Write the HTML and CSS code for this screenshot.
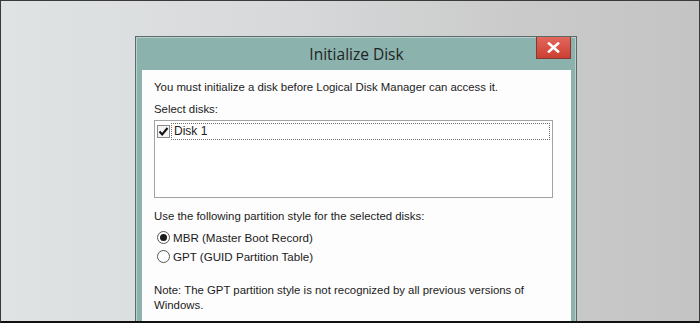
FILE: index.html
```html
<!DOCTYPE html>
<html>
<head>
<meta charset="utf-8">
<link rel="stylesheet" href="styles.css">
</head>
<body>
<div class="stage">
  <div class="dialog">
    <div class="titlebar">
      <div class="title">Initialize Disk</div>
      <div class="close">
        <svg width="13" height="11" viewBox="0 0 13 11"><path d="M2 1.5 L11 9.5 M11 1.5 L2 9.5" stroke="#fff" stroke-width="2.6" stroke-linecap="square"/></svg>
      </div>
    </div>
    <div class="client">
      <p class="line">You must initialize a disk before Logical Disk Manager can access it.</p>
      <p class="line sel">Select disks:</p>
      <div class="listbox">
        <div class="item">
          <span class="check"><svg width="11" height="11" viewBox="0 0 11 11"><path d="M1.5 5.5 L4.2 8.5 L9.5 2" fill="none" stroke="#111" stroke-width="2"/></svg></span>
          <span class="focus">Disk 1</span>
        </div>
      </div>
      <p class="line use">Use the following partition style for the selected disks:</p>
      <div class="radio first"><span class="dot on"></span><span>MBR (Master Boot Record)</span></div>
      <div class="radio"><span class="dot"></span><span>GPT (GUID Partition Table)</span></div>
      <p class="line note">Note: The GPT partition style is not recognized by all previous versions of Windows.</p>
    </div>
  </div>
</div>
</body>
</html>
```

FILE: styles.css
```css
html, body {
  margin: 0;
  padding: 0;
}
body {
  width: 700px;
  height: 323px;
  overflow: hidden;
  font-family: "Liberation Sans", Arial, sans-serif;
}
.stage {
  box-sizing: border-box;
  width: 700px;
  height: 323px;
  overflow: hidden;
  border: 1px solid #3a3a3a;
  border-bottom: 2px solid #111;
  background: linear-gradient(to right, #e0e3e4 0%, #d7d9da 40%, #cacaca 75%, #c4c4c4 100%);
  padding: 35px 0 0 134px;
}
.dialog {
  width: 429px;
  border: 1px solid #5b6b6a;
  border-bottom: none;
  background: #8cb2ae;
  box-shadow: inset 1px 1px 0 #b9d1ce, inset -1px 0 0 #b9d1ce;
  padding: 0 5px 0 6px;
  height: 300px;
}
.titlebar {
  position: relative;
  height: 33px;
  display: flex;
  justify-content: center;
  align-items: center;
}
.title {
  font-family: "Open Sans", "Noto Sans", sans-serif;
  font-size: 15.5px;
  color: #1d2424;
  padding-top: 1px;
}
.close {
  position: absolute;
  right: 0;
  top: 0;
  width: 35px;
  height: 22px;
  box-sizing: border-box;
  border: 1px solid #7e3a33;
  border-top: none;
  background: linear-gradient(#e2675b, #cc3f33);
  display: flex;
  align-items: center;
  justify-content: center;
}
.client {
  background: #fdfdfd;
  height: 300px;
  padding: 10px 0 0 12px;
  box-sizing: border-box;
  font-size: 11.4px;
  color: #1b1b1b;
}
.line {
  margin: 0;
  line-height: 15px;
  white-space: nowrap;
}
.sel { margin-top: 7px; }
.listbox {
  margin-top: 3px;
  width: 399px;
  height: 78px;
  box-sizing: border-box;
  border: 1px solid #a3a3a3;
  background: #fff;
  padding: 2px 2px 0 2px;
}
.item {
  display: flex;
  align-items: center;
  height: 17px;
}
.check {
  width: 13px;
  height: 13px;
  box-sizing: border-box;
  border: 1px solid #8a8a8a;
  background: #f4f4f4;
  display: flex;
  align-items: center;
  justify-content: center;
  margin-right: 1px;
}
.focus {
  flex: 1;
  height: 17px;
  box-sizing: border-box;
  border: 1px dotted #6c6c6c;
  line-height: 15px;
  padding-left: 2px;
  font-size: 12px;
}
.use { margin-top: 11px; }
.radio {
  display: flex;
  align-items: center;
  height: 19px;
  padding-left: 3px;
  font-size: 11.6px;
}
.radio.first { margin-top: 4px; }
.dot {
  width: 13px;
  height: 13px;
  box-sizing: border-box;
  border: 1px solid #555;
  border-radius: 50%;
  background: #fff;
  margin-right: 3px;
  display: flex;
  align-items: center;
  justify-content: center;
}
.dot.on::after {
  content: "";
  width: 7px;
  height: 7px;
  border-radius: 50%;
  background: #1a1a1a;
}
.note {
  margin-top: 17px;
  white-space: normal;
  width: 390px;
}
```
